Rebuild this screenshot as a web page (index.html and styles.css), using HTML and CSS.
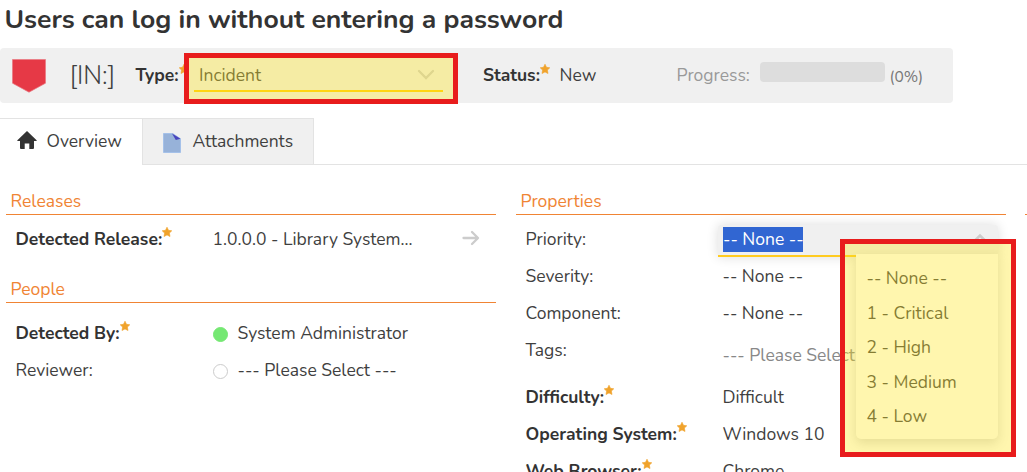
FILE: index.html
```
<!DOCTYPE html>
<html lang="en">
<head>
<meta charset="utf-8">
<title>Incident details</title>
<link rel="stylesheet" href="styles.css">
</head>
<body>
<svg class="sprite" width="0" height="0" aria-hidden="true">
  <symbol id="star" viewBox="0 0 10 10"><path d="M5 .2 6.5 3.3 9.8 3.8 7.4 6.1 8 9.5 5 7.9 2 9.5 2.6 6.1.2 3.8 3.5 3.3Z" fill="#f0a32c" stroke="#f0a32c" stroke-width=".6" stroke-linejoin="round"/></symbol>
</svg>
<main class="page">
  <h1 class="title">Users can log in without entering a password</h1>
  <section class="summary">
    <svg class="shield" width="34" height="34" viewBox="0 0 34 34"><path d="M.5.5h33v23.7L17 33.2.5 24.2Z" fill="#e63946" stroke="#e97780" stroke-width=".7"/></svg>
    <span class="token">[IN:]</span>
    <span class="label required type-label">Type:<svg class="star"><use href="#star"/></svg></span>
    <div class="type-field"><span>Incident</span><svg width="18" height="11" viewBox="0 0 18 11"><path d="M2 2l7 7 7-7" fill="none" stroke="#ccc" stroke-width="2.3" stroke-linecap="round"/></svg>
      <div class="highlight highlight-type"></div>
    </div>
    <span class="label required status-label">Status:<svg class="star"><use href="#star"/></svg></span>
    <span class="status-value">New</span>
    <span class="progress-label">Progress:</span>
    <span class="progress-bar"></span>
    <span class="progress-value">(0%)</span>
  </section>
  <nav class="tabs">
    <a class="tab active"><svg width="22" height="20" viewBox="0 0 22 20"><path d="M11 1 20.6 10.2q.7.8-.4.8H18v7q0 1-1 1h-3.7v-5.5H8.7V19H5q-1 0-1-1v-7H1.8q-1.1 0-.4-.8Z" fill="#333"/></svg><span>Overview</span></a>
    <a class="tab"><svg width="18" height="20" viewBox="0 0 18 20"><path d="M.5.5h9.2l7.8 5.3v13.7H.5Z" fill="#97b2d9" stroke="#a5c1e9"/><path d="M9 .5 17.5 5.8 12.8 7Z" fill="#4944bd"/></svg><span>Attachments</span></a>
  </nav>
  <div class="columns">
    <div class="column">
      <h2 class="group">Releases</h2>
      <dl class="fields">
        <div class="row"><dt class="required">Detected Release:<svg class="star"><use href="#star"/></svg></dt><dd class="spread"><span>1.0.0.0 - Library System...</span><svg class="arrow" width="18" height="16" viewBox="0 0 18 16"><path d="M1.5 8h14M10 2l6 6-6 6" fill="none" stroke="#ccc" stroke-width="2.3" stroke-linecap="round" stroke-linejoin="round"/></svg></dd></div>
      </dl>
      <h2 class="group people">People</h2>
      <dl class="fields people-fields">
        <div class="row"><dt class="required">Detected By:<svg class="star"><use href="#star"/></svg></dt><dd><i class="dot online"></i><span>System Administrator</span></dd></div>
        <div class="row"><dt>Reviewer:</dt><dd><i class="dot"></i><span>--- Please Select ---</span></dd></div>
      </dl>
    </div>
    <div class="column">
      <h2 class="group">Properties</h2>
      <dl class="fields">
        <div class="row"><dt>Priority:</dt><dd class="dropdown"><span class="selected">-- None --</span><svg class="caret" width="16" height="10" viewBox="0 0 16 10"><path d="M2 8.5l6-6 6 6" fill="none" stroke="#ccc" stroke-width="2.5"/></svg>
          <ul class="menu"><li>-- None --</li><li>1 - Critical</li><li>2 - High</li><li>3 - Medium</li><li>4 - Low</li></ul>
          <div class="highlight highlight-menu"></div></dd></div>
        <div class="row"><dt>Severity:</dt><dd>-- None --</dd></div>
        <div class="row"><dt>Component:</dt><dd>-- None --</dd></div>
        <div class="row tags"><dt>Tags:</dt><dd class="placeholder">--- Please Select</dd></div>
        <div class="row"><dt class="required">Difficulty:<svg class="star"><use href="#star"/></svg></dt><dd>Difficult</dd></div>
        <div class="row"><dt class="required">Operating System:<svg class="star"><use href="#star"/></svg></dt><dd>Windows 10</dd></div>
        <div class="row"><dt class="required">Web Browser:<svg class="star"><use href="#star"/></svg></dt><dd>Chrome</dd></div>
      </dl>
    </div>
    <div class="column next"><h2 class="group"></h2></div>
  </div>
</main>
</body>
</html>
```
FILE: styles.css
```
* { box-sizing: border-box; }
body { margin: 0; height: 472px; overflow: hidden; background: #fff; color: #3f3f3f; font: 17.5px/24px Nunito, Lato, sans-serif; }
.page { width: 1027px; height: 472px; overflow: hidden; }
.sprite { position: absolute; }
.title { margin: 0; padding: 3px 0 0 4.5px; height: 48px; font-size: 26.55px; line-height: 32px; font-weight: 700; color: #333; white-space: nowrap; }
.summary { display: flex; align-items: center; width: 953px; height: 55px; padding-left: 12px; background: #f0f0f0; border-radius: 4px; white-space: nowrap; }
.shield { flex: none; }
.token { width: 66px; margin-left: 23.5px; font-size: 25.5px; font-weight: 300; }
.required { font-weight: 700; color: #333; }
.star { width: 10px; height: 10px; vertical-align: 7.5px; }
.type-label { width: 58.5px; padding-bottom: 1px; }
.type-field { position: relative; display: flex; align-items: center; justify-content: space-between; width: 249px; height: 33px; padding: 1px 8px 0 5px; border-bottom: 2px solid #ffcb05; margin-top: -1px; }
.status-label { width: 76.5px; margin-left: 40px; padding-bottom: 1px; }
.status-value { width: 117px; padding-bottom: 1px; }
.progress-label { width: 83.5px; padding-bottom: 1px; color: #999; }
.progress-bar { width: 125px; height: 20px; margin-top: -7px; background: #ddd; border-radius: 4px; }
.progress-value { margin-left: 4.5px; margin-top: 3px; font-size: 15.5px; color: #777; }
.highlight { position: absolute; z-index: 5; border: 5px solid #e81c1c; background: rgba(255, 231, 36, .37); background-clip: padding-box; }
.highlight-type { left: -10px; top: -6px; width: 274px; height: 51px; }
.tabs { display: flex; height: 47px; margin-top: 15px; }
.tabs::after { content: ""; flex: 1; border-bottom: 1px solid #e3e3e3; }
.tab { display: flex; align-items: center; border-top: 1px solid #e3e3e3; gap: 9px; width: 142px; padding-left: 15.5px; padding-bottom: 3px; }
.tab:first-child svg { margin-top: -2px; }
.tab:last-child { width: 172px; gap: 11.5px; padding-left: 20px; padding-bottom: 2px; border: 1px solid #e3e3e3; background: #f0f0f0; }
.tab:last-child svg { margin-top: 5px; }
.columns { display: grid; grid-template-columns: 490px 490px 490px; column-gap: 20px; padding: 24px 0 0 6px; }
.group { display: flex; align-items: center; height: 26px; margin: 0; padding: 0 0 2px 4.5px; border-bottom: 1px solid #f08434; color: #f08434; font-size: 17.5px; font-weight: 400; }
.next { margin-left: -1px; }
.people { margin-top: 20px; }
.fields { margin: 0; padding: 5px 0 0 9.5px; }
.people-fields { padding-top: 11px; }
.row { display: grid; grid-template-columns: 197px 1fr; height: 37px; align-items: center; }
dt, dd { margin: 0; white-space: nowrap; }
dd { display: flex; align-items: center; }
.row.tags { height: 47px; padding-bottom: 10px; }
.placeholder { padding-top: 10px; color: #888; }
.spread { justify-content: space-between; padding-right: 16.5px; }
.arrow { margin-top: -2px; }
.dot { width: 15px; height: 15px; margin: 3px 10px 0 0; border: 1px solid #ccc; border-radius: 50%; }
.dot.online { background: #75e873; border-color: #75e873; }
.dropdown { position: relative; justify-content: space-between; height: 32px; margin: 5px 8px 0 -5px; padding: 0 10px 1px 5.5px; background: #f0f0f0; border-bottom: 2px solid #ffcb20; border-radius: 4px 4px 0 0; box-shadow: 0 0 12px rgba(0, 0, 0, .14); }
.selected { height: 25px; width: 80px; color: #fff; background: #3166d2; }
.caret { margin-top: -4px; }
.menu { position: absolute; z-index: 3; left: 138px; top: 29px; width: 142px; height: 185px; margin: 0; padding: 7px 11px; list-style: none; background: #fff; border-radius: 0 0 5px 5px; box-shadow: 0 4px 12px rgba(0, 0, 0, .16); }
.menu li { height: 34.5px; line-height: 34px; }
.highlight-menu { left: 122.5px; top: 14px; width: 176px; height: 218px; }
```
